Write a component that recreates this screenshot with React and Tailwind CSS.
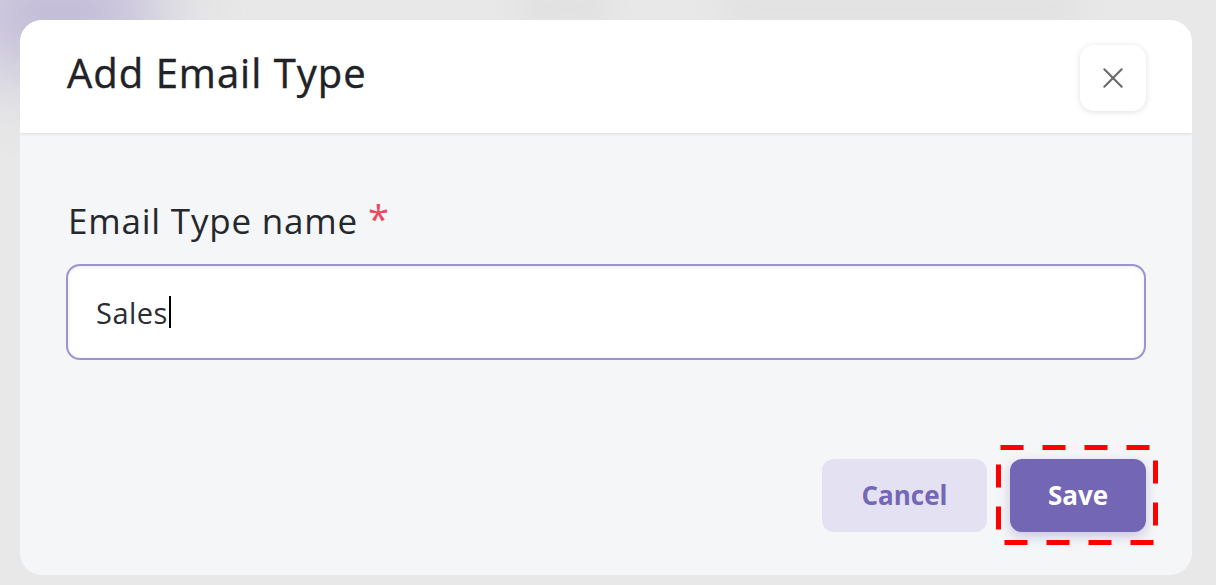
import React from 'react';

const font = { fontFamily: '"Open Sans", "Noto Sans", sans-serif' };

const CloseIcon = () => (
    <svg width="26" height="26" viewBox="0 0 24 24" fill="none" stroke="#6b6b6b" strokeWidth="2" strokeLinecap="round">
        <path d="M4 4L20 20" />
        <path d="M20 4L4 20" />
    </svg>
);

const DashedHighlight = () => (
    <svg className="pointer-events-none absolute -left-[14px] -top-[14px]" width="162" height="100" viewBox="0 0 162 100" fill="none">
        <rect x="2.5" y="2.5" width="157" height="95" stroke="#ff0000" strokeWidth="5" strokeDasharray="23 19" strokeDashoffset="-2" />
    </svg>
);

const App = () => {
    return (
        <div className="relative w-[1216px] h-[585px] overflow-hidden bg-[#e8e8e8] pt-[20px] pl-[20px]" style={font}>
            <div className="absolute -left-[40px] -top-[40px] h-[110px] w-[200px] rounded-full bg-[#bdb6d6] blur-2xl" />
            <div className="absolute left-[520px] top-0 h-[18px] w-[90px] rounded-full bg-[#dcdcdc] blur-md" />
            <div className="absolute left-[720px] top-0 h-[18px] w-[360px] rounded-full bg-[#dedede] blur-md" />

            <div className="relative flex w-[1172px] h-[555px] flex-col overflow-hidden rounded-[22px] bg-[#f5f6f8]">
                <div className="flex h-[113px] items-center justify-between bg-white pl-[47px] pr-[46px] shadow-[0_1px_3px_rgba(0,0,0,0.12)]">
                    <h2 className="text-[40px] font-medium leading-none text-[#1f2226] -mt-[8px] tracking-[1px] [-webkit-text-stroke:0.4px_#1f2226]">Add Email Type</h2>
                    <button className="mt-[3px] flex h-[66px] w-[66px] items-center justify-center rounded-[14px] bg-white shadow-[0_1px_6px_rgba(0,0,0,0.13)]">
                        <CloseIcon />
                    </button>
                </div>

                <div className="flex flex-1 flex-col px-[46px] pt-[70px]">
                    <label className="flex items-start gap-[10px] pl-[2px] text-[35px] leading-none text-[#25282c] tracking-[0.8px]">
                        Email Type name
                        <span className="text-[38px] text-[#f0455f] -mt-[4px]">*</span>
                    </label>
                    <div className="mt-[26px] flex h-[96px] items-center rounded-[14px] border-2 border-[#9d93d1] bg-white px-[28px] shadow-[inset_0_1px_4px_rgba(0,0,0,0.08)]">
                        <span className="text-[29px] leading-none text-[#2a2d31] tracking-[0.5px]">Sales</span>
                        <span className="ml-[1px] h-[32px] w-[2px] bg-black" />
                    </div>

                    <div className="mt-[99px] flex justify-end gap-[23px]">
                        <button className="h-[73px] w-[165px] rounded-[12px] bg-[#e4e1f2] text-[26px] font-bold text-[#7467b5]">
                            Cancel
                        </button>
                        <div className="relative">
                            <button className="h-[73px] w-[136px] rounded-[12px] bg-[#7366b5] text-[26px] font-bold text-white shadow-[0_4px_12px_rgba(115,102,181,0.35)]">
                                Save
                            </button>
                            <DashedHighlight />
                        </div>
                    </div>
                </div>
            </div>
        </div>
    );
};

export default App;
